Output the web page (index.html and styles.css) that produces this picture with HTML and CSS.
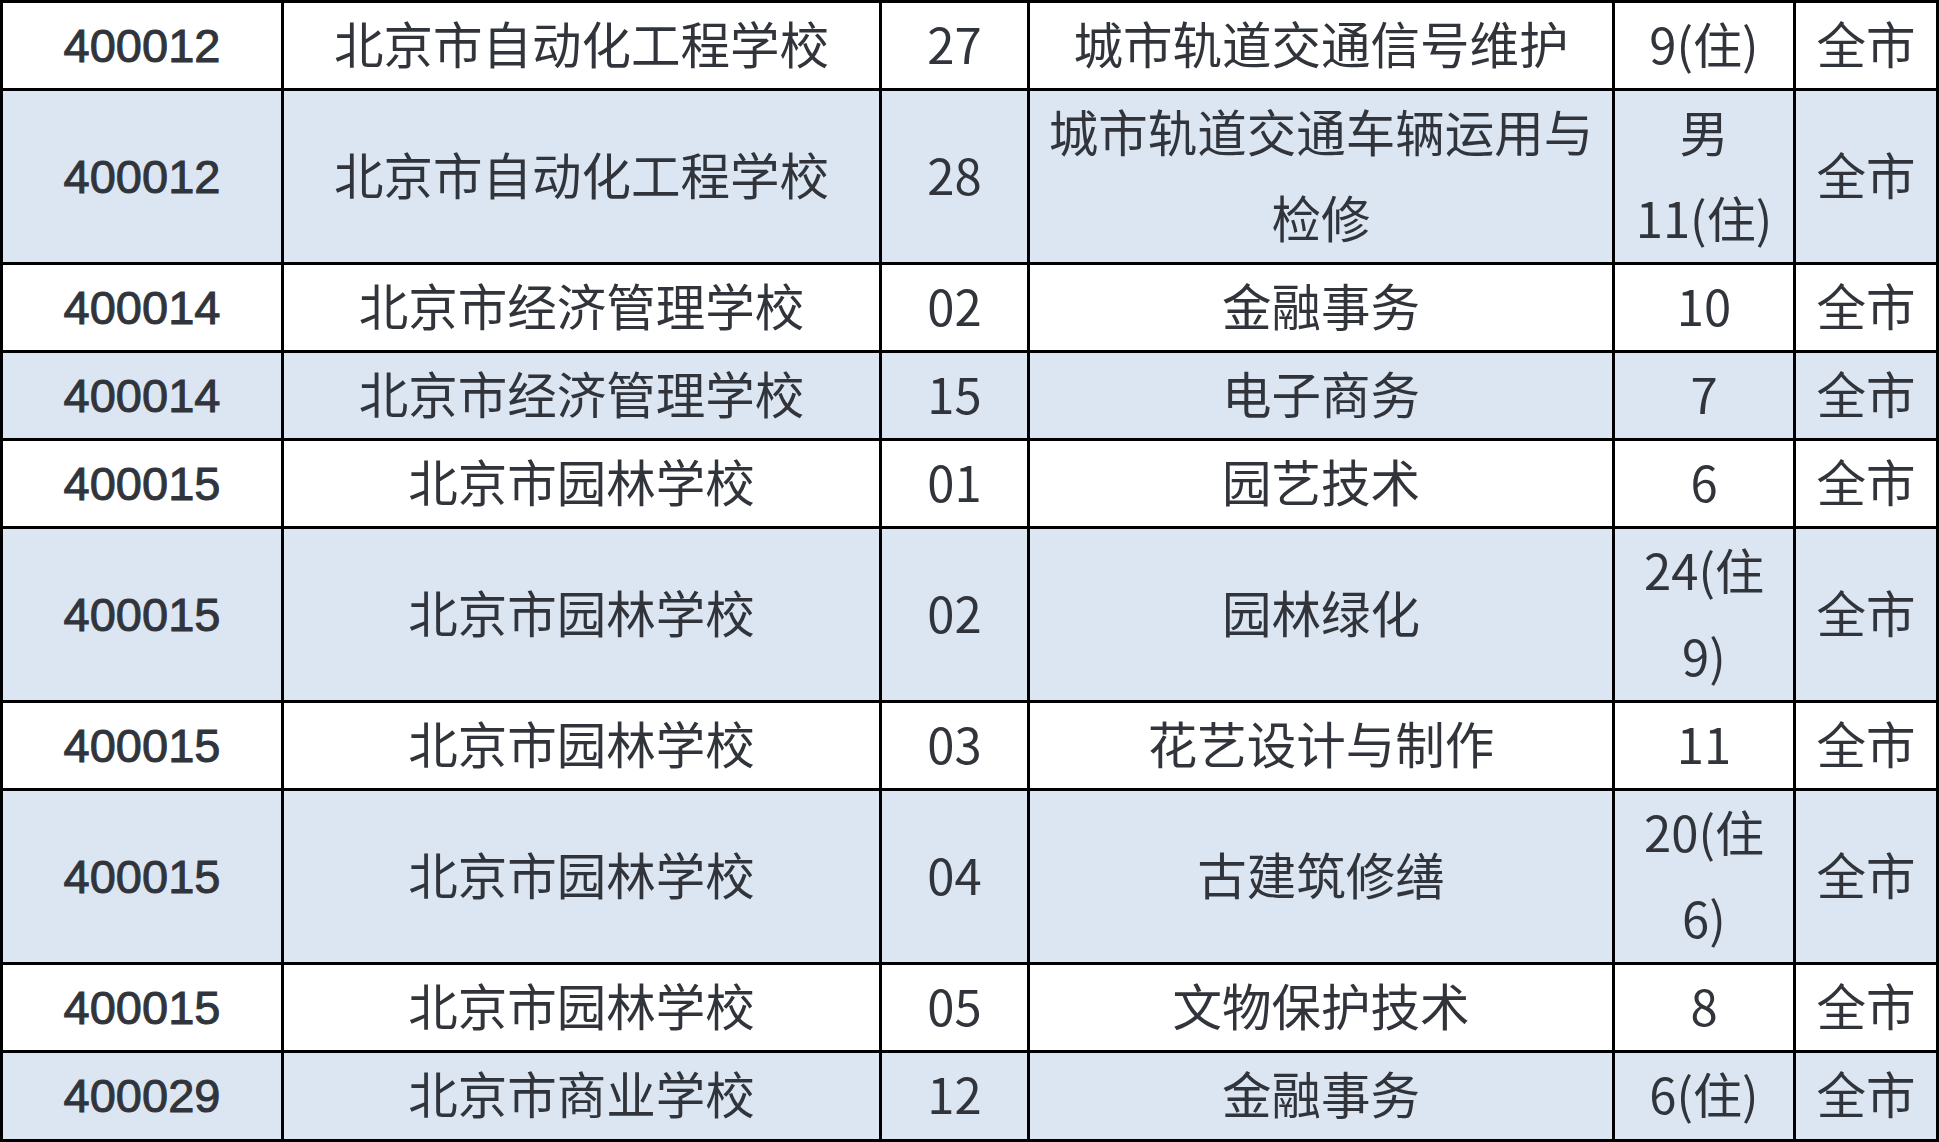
FILE: index.html
```html
<!DOCTYPE html>
<html lang="zh-CN">
<head>
<meta charset="utf-8">
<title>招生计划</title>
<link rel="stylesheet" href="styles.css">
</head>
<body>
<div class="sheet">
  <div class="row single">
    <div class="cell code">400012</div><div class="cell">北京市自动化工程学校</div><div class="cell num">27</div><div class="cell">城市轨道交通信号维护</div><div class="cell num">9(住)</div><div class="cell">全市</div>
  </div>
  <div class="row double alt">
    <div class="cell code">400012</div><div class="cell">北京市自动化工程学校</div><div class="cell num">28</div><div class="cell">城市轨道交通车辆运用与<br>检修</div><div class="cell num">男<br>11(住)</div><div class="cell">全市</div>
  </div>
  <div class="row single">
    <div class="cell code">400014</div><div class="cell">北京市经济管理学校</div><div class="cell num">02</div><div class="cell">金融事务</div><div class="cell num">10</div><div class="cell">全市</div>
  </div>
  <div class="row single alt">
    <div class="cell code">400014</div><div class="cell">北京市经济管理学校</div><div class="cell num">15</div><div class="cell">电子商务</div><div class="cell num">7</div><div class="cell">全市</div>
  </div>
  <div class="row single">
    <div class="cell code">400015</div><div class="cell">北京市园林学校</div><div class="cell num">01</div><div class="cell">园艺技术</div><div class="cell num">6</div><div class="cell">全市</div>
  </div>
  <div class="row double alt">
    <div class="cell code">400015</div><div class="cell">北京市园林学校</div><div class="cell num">02</div><div class="cell">园林绿化</div><div class="cell num">24(住<br>9)</div><div class="cell">全市</div>
  </div>
  <div class="row single">
    <div class="cell code">400015</div><div class="cell">北京市园林学校</div><div class="cell num">03</div><div class="cell">花艺设计与制作</div><div class="cell num">11</div><div class="cell">全市</div>
  </div>
  <div class="row double alt">
    <div class="cell code">400015</div><div class="cell">北京市园林学校</div><div class="cell num">04</div><div class="cell">古建筑修缮</div><div class="cell num">20(住<br>6)</div><div class="cell">全市</div>
  </div>
  <div class="row single">
    <div class="cell code">400015</div><div class="cell">北京市园林学校</div><div class="cell num">05</div><div class="cell">文物保护技术</div><div class="cell num">8</div><div class="cell">全市</div>
  </div>
  <div class="row single alt last">
    <div class="cell code">400029</div><div class="cell">北京市商业学校</div><div class="cell num">12</div><div class="cell">金融事务</div><div class="cell num">6(住)</div><div class="cell">全市</div>
  </div>
</div>
</body>
</html>
```

FILE: styles.css
```css
html, body {
  margin: 0;
  padding: 0;
  background: #ffffff;
  overflow: hidden;
}

.sheet {
  width: 1939px;
  box-sizing: border-box;
  display: flex;
  flex-direction: column;
  gap: 3px;
  padding: 3px;
  background: #000000;
  font-family: "Noto Sans CJK SC", "Noto Sans", sans-serif;
  color: #31353b;
}

.row {
  display: grid;
  grid-template-columns: 278px 595px 145px 582px 178px 140px;
  grid-template-rows: minmax(0, 1fr);
  gap: 3px;
}

.row.single { height: 85px; }
.row.double { height: 171px; }
.row.last { height: 86px; }

.cell {
  display: flex;
  align-items: center;
  justify-content: center;
  text-align: center;
  box-sizing: border-box;
  min-height: 0;
  overflow: hidden;
  padding-bottom: 6px;
  background: #ffffff;
  font-size: 49.5px;
  line-height: 86px;
  white-space: nowrap;
}

.row.alt .cell {
  background: #dce6f2;
}

.cell.code {
  padding-bottom: 0;
  font-family: "Liberation Sans", Arial, sans-serif;
  font-weight: normal;
  font-size: 47px;
  -webkit-text-stroke: 1px #31353b;
}

.cell.num {
  font-size: 49px;
}
```
